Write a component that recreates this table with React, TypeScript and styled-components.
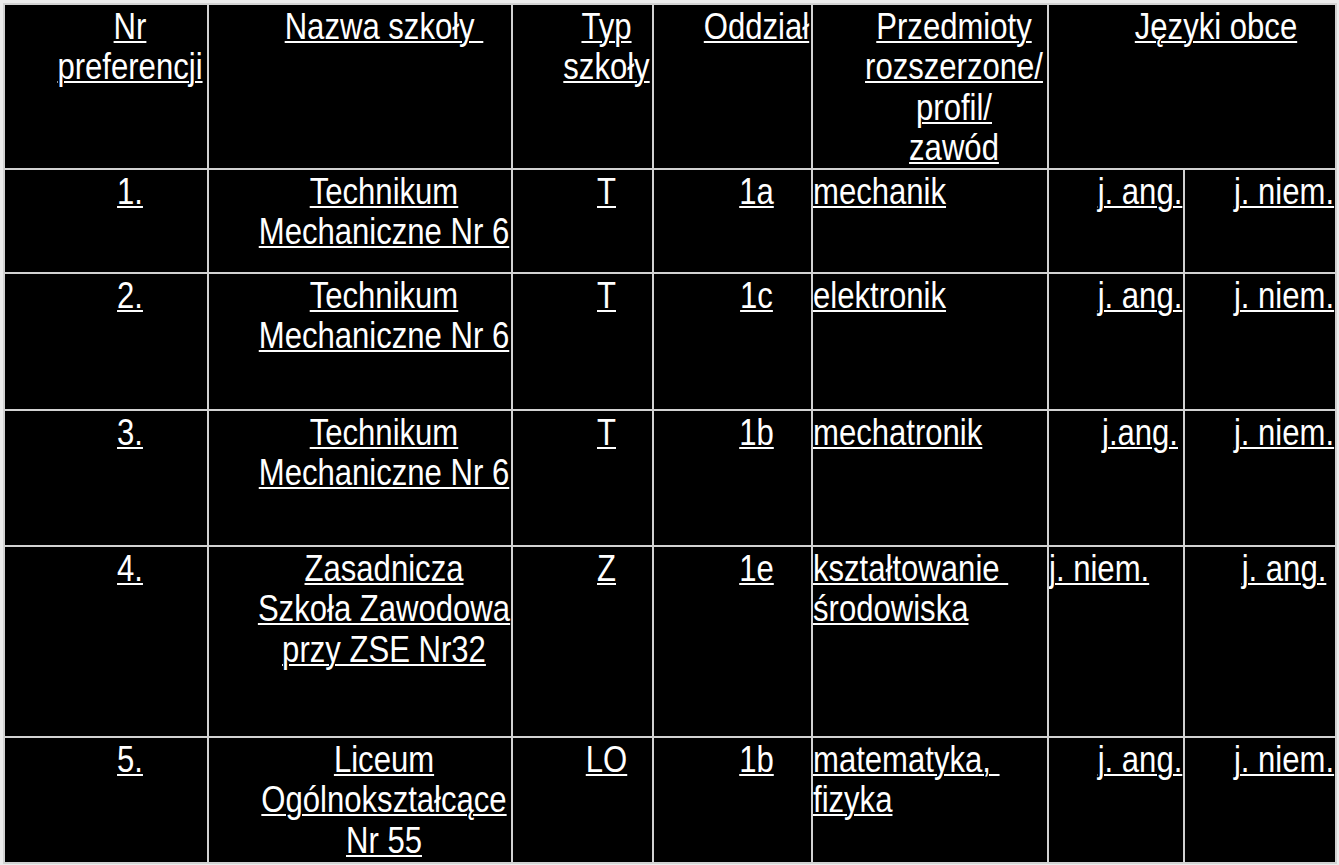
import { Fragment } from "react";
import styled, { createGlobalStyle } from "styled-components";

type Align = "center" | "left";

type CellData = {
  lines: string[];
  align?: Align;
};

// no narrow face is installed, so the Arial-metric sans is squeezed like Arial Narrow
const NARROW = 0.84;

const header: { lines: string[]; span?: number }[] = [
  { lines: ["Nr", "preferencji"] },
  { lines: ["Nazwa szkoły\u00a0"] },
  { lines: ["Typ", "szkoły"] },
  { lines: ["Oddział"] },
  { lines: ["Przedmioty", "rozszerzone/", "profil/", "zawód"] },
  { lines: ["Języki obce"], span: 2 },
];

const tech = ["Technikum", "Mechaniczne Nr 6"];

const rows: CellData[][] = [
  [
    { lines: ["1."] },
    { lines: tech },
    { lines: ["T"] },
    { lines: ["1a"] },
    { lines: ["mechanik"], align: "left" },
    { lines: ["j. ang."] },
    { lines: ["j. niem."] },
  ],
  [
    { lines: ["2."] },
    { lines: tech },
    { lines: ["T"] },
    { lines: ["1c"] },
    { lines: ["elektronik"], align: "left" },
    { lines: ["j. ang."] },
    { lines: ["j. niem."] },
  ],
  [
    { lines: ["3."] },
    { lines: tech },
    { lines: ["T"] },
    { lines: ["1b"] },
    { lines: ["mechatronik"], align: "left" },
    { lines: ["j.ang."] },
    { lines: ["j. niem."] },
  ],
  [
    { lines: ["4."] },
    { lines: ["Zasadnicza", "Szkoła Zawodowa", "przy ZSE Nr32"] },
    { lines: ["Z"] },
    { lines: ["1e"] },
    { lines: ["kształtowanie\u00a0", "środowiska"], align: "left" },
    { lines: ["j. niem."], align: "left" },
    { lines: ["j. ang."] },
  ],
  [
    { lines: ["5."] },
    { lines: ["Liceum", "Ogólnokształcące", "Nr 55"] },
    { lines: ["LO"] },
    { lines: ["1b"] },
    { lines: ["matematyka,\u00a0", "fizyka"], align: "left" },
    { lines: ["j. ang."] },
    { lines: ["j. niem."] },
  ],
];

const Content = ({ lines, align }: { lines: string[]; align: Align }) => (
  <Inner $align={align}>
    <Text>
      {lines.map((line, i) => (
        <Fragment key={i}>
          {i > 0 && <br />}
          {line}
        </Fragment>
      ))}
    </Text>
  </Inner>
);

const App = () => (
  <>
    <GlobalStyle />
    <Grid>
      {header.map((h, i) => (
        <Cell key={i} $span={h.span ?? 1}>
          <Content lines={h.lines} align="center" />
        </Cell>
      ))}
      {rows.map((row, r) =>
        row.map((c, i) => (
          <Cell key={`${r}-${i}`}>
            <Content lines={c.lines} align={c.align ?? "center"} />
          </Cell>
        ))
      )}
    </Grid>
  </>
);

export default App;

const GlobalStyle = createGlobalStyle`
  html, body {
    margin: 0;
    padding: 0;
    background: #ececec;
  }
`;

const Grid = styled.div`
  display: grid;
  grid-template-columns: 202px 302px 139px 157px 234px 134px 150px;
  grid-template-rows: 163px 102px 135px 134px 189px 124px;
  gap: 2px;
  width: fit-content;
  margin: 3px 0 0 3px;
  padding: 2px;
  background: #d2d2d2;
`;

const Cell = styled.div<{ $span?: number }>`
  grid-column: span ${(p) => p.$span ?? 1};
  background: #000;
  overflow: hidden;
`;

const Inner = styled.div<{ $align: Align }>`
  box-sizing: border-box;
  width: calc(100% / ${NARROW});
  padding-top: 2px;
  padding-left: ${(p) => (p.$align === "left" ? "0" : `${48 / NARROW}px`)};
  transform: scaleX(${NARROW});
  transform-origin: left top;
  color: #fff;
  font-family: "Liberation Sans", Arial, sans-serif;
  font-size: 37px;
  line-height: 40.3px;
  text-align: ${(p) => p.$align};
  white-space: nowrap;
`;

const Text = styled.span`
  text-decoration: underline;
  text-decoration-thickness: 2px;
  text-underline-offset: 2px;
`;
